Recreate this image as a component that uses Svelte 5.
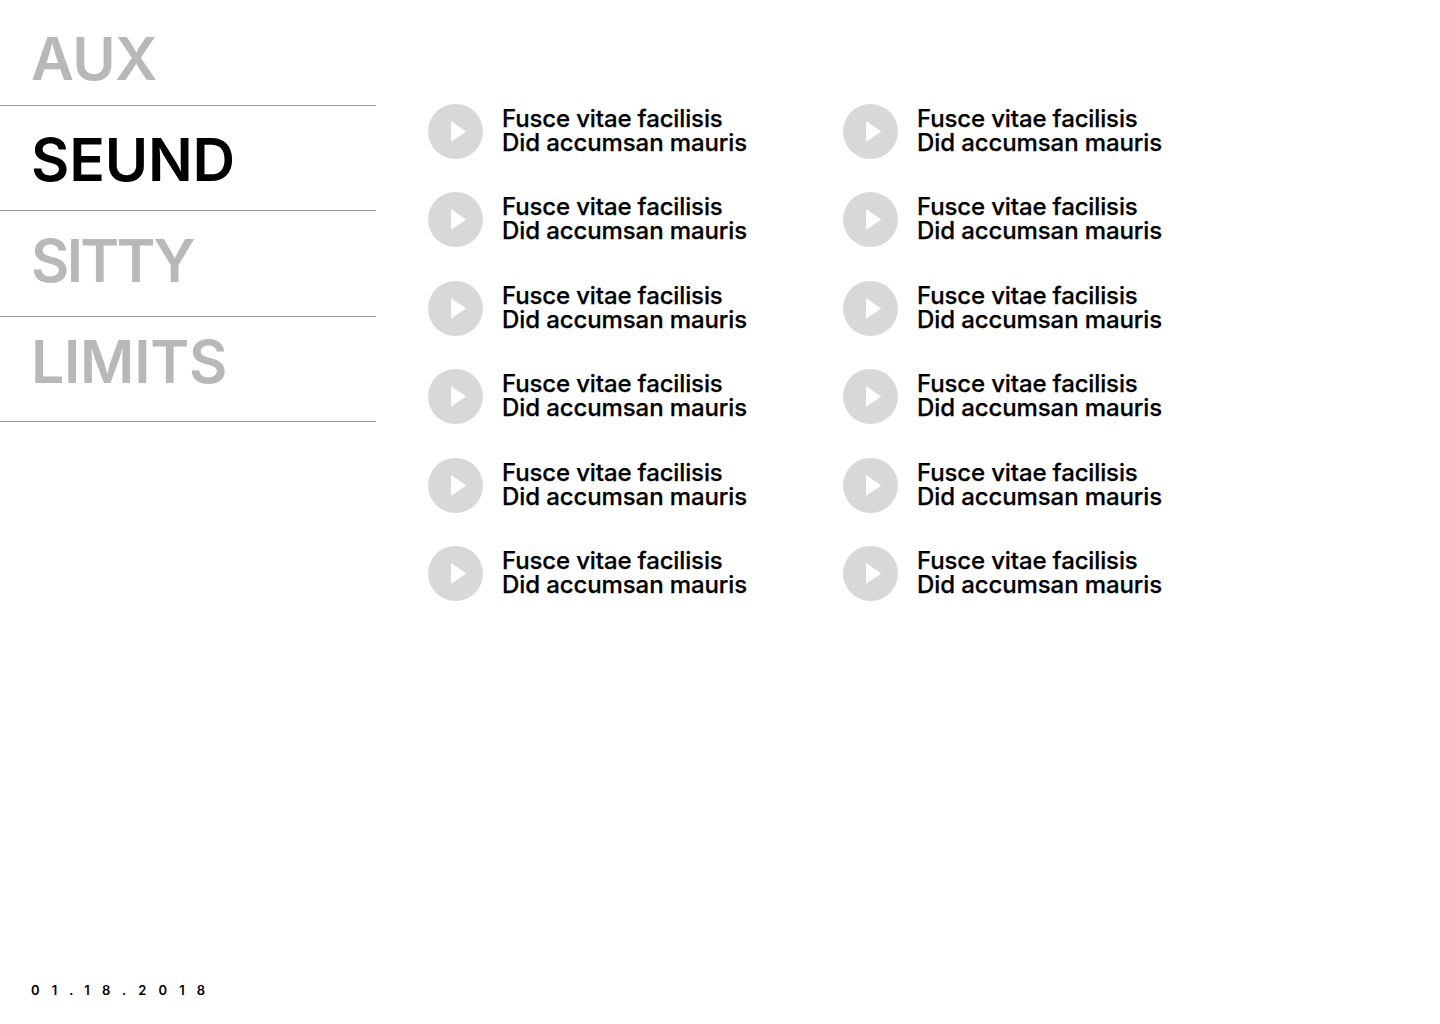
<script>
  const sections = ['AUX', 'SEUND', 'SITTY', 'LIMITS'];
  const active = 'SEUND';
  const tracks = Array.from({ length: 12 }, () => ['Fusce vitae facilisis', 'Did accumsan mauris']);
</script>

<div class="page">
  <aside>
    <nav>
      {#each sections as name}
        <div class="section {name.toLowerCase()}" class:active={name === active}>{name}</div>
      {/each}
    </nav>
    <time>01.18.2018</time>
  </aside>
  <main>
    {#each tracks as [title, subtitle]}
      <article>
        <svg width="55" height="55" viewBox="0 0 55 55" aria-hidden="true">
          <circle cx="27.5" cy="27.5" r="27.5" fill="#d8d8d8" />
          <path d="M23 17L38.2 27.4L23 37.8Z" fill="#fff" />
        </svg>
        <div class="copy">
          <div class="title">{title}</div>
          <div class="subtitle">{subtitle}</div>
        </div>
      </article>
    {/each}
  </main>
</div>

<style>
  :global(body) {
    background: #fff;
  }
  .page {
    display: flex;
    width: 1440px;
    height: 1024px;
    overflow: hidden;
    font-family: Inter, 'Liberation Sans', sans-serif;
    color: #000;
  }
  aside {
    display: flex;
    flex-direction: column;
    justify-content: space-between;
    width: 376px;
    padding-bottom: 24px;
    box-sizing: border-box;
  }
  nav {
    padding-top: 0.7px;
  }
  .section {
    box-sizing: border-box;
    height: 105.33px;
    border-bottom: 1px solid #979797;
    padding-left: 31px;
    font-size: 59px;
    line-height: 73px;
    font-weight: 600;
    color: #b8b8b8;
    white-space: nowrap;
  }
  .aux {
    padding-top: 21.5px;
    letter-spacing: -0.6px;
  }
  .seund {
    padding-top: 17.2px;
    letter-spacing: -0.2px;
  }
  .sitty {
    padding-top: 12.9px;
    letter-spacing: -2.7px;
  }
  .limits {
    padding-top: 8.6px;
    letter-spacing: -0.3px;
  }
  .section.active {
    color: #000;
  }
  time {
    padding-left: 31px;
    font-size: 13px;
    line-height: 20px;
    font-weight: 600;
    letter-spacing: 12.1px;
  }
  main {
    display: grid;
    grid-template-columns: 415px 415px;
    grid-auto-rows: 88.4px;
    align-content: start;
    padding: 104px 0 0 52px;
  }
  article {
    display: flex;
    gap: 19px;
  }
  .copy {
    padding-top: 3px;
    font-size: 24px;
    line-height: 24px;
    font-weight: 500;
    -webkit-text-stroke: 0.25px currentColor;
    white-space: nowrap;
  }
  .title {
    letter-spacing: -0.14px;
  }
  .subtitle {
    letter-spacing: -0.1px;
  }
</style>
